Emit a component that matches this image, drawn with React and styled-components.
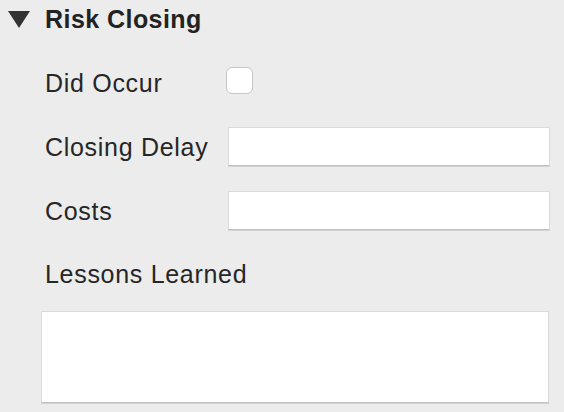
import React from "react";
import styled, { createGlobalStyle } from "styled-components";

const Global = createGlobalStyle`
  html, body {
    margin: 0;
    padding: 0;
    background: #ececec;
  }
  body {
    font-family: "Liberation Sans", Arial, sans-serif;
    color: #262626;
  }
`;

const Panel = styled.div`
  width: 564px;
  height: 412px;
  box-sizing: border-box;
  background: #ececec;
  overflow: hidden;
`;

const Header = styled.div`
  display: flex;
  align-items: center;
  height: 38px;
  padding-left: 8px;
  gap: 15px;
`;

const Title = styled.h2`
  margin: 0;
  font-size: 25px;
  font-weight: 700;
  letter-spacing: 0.45px;
  color: #222;
`;

const Form = styled.div`
  display: grid;
  grid-template-columns: 183px 1fr;
  grid-auto-rows: 39px;
  row-gap: 25px;
  align-items: center;
  margin-top: 25px;
  padding: 0 14px 0 45px;
`;

const Label = styled.label`
  font-size: 25px;
  letter-spacing: 0.7px;
  line-height: 30px;
  white-space: nowrap;
`;

const Check = styled.input.attrs({ type: "checkbox" })`
  appearance: none;
  margin: 0 0 0 -2px;
  width: 27px;
  height: 27px;
  box-sizing: border-box;
  background: #fff;
  border: 1px solid #c6c6c6;
  border-radius: 6px;
`;

const Field = styled.input.attrs({ type: "text" })`
  width: 100%;
  height: 39px;
  margin: 0;
  box-sizing: border-box;
  background: #fff;
  border: 1px solid #dadada;
  border-bottom-color: #c2c2c2;
  box-shadow: 0 1px 0 #d2d2d2;
  outline: none;
`;

const Block = styled.div`
  display: flex;
  flex-direction: column;
  margin-top: 29px;
  padding: 0 15px 0 41px;
`;

const BlockLabel = styled(Label)`
  padding-left: 4px;
`;

const Area = styled.textarea`
  margin: 22px 0 0;
  width: 508px;
  height: 92px;
  box-sizing: border-box;
  background: #fff;
  border: 1px solid #dadada;
  border-bottom-color: #c2c2c2;
  box-shadow: 0 1px 0 #d2d2d2;
  resize: none;
  outline: none;
`;

const Disclosure = () => (
  <svg width="22" height="17" viewBox="0 0 22 17">
    <polygon points="0,0 22,0 11,17" fill="#333" />
  </svg>
);

export default function App() {
  return (
    <Panel>
      <Global />
      <Header>
        <Disclosure />
        <Title>Risk Closing</Title>
      </Header>
      <Form>
        <Label>Did Occur</Label>
        <div>
          <Check />
        </div>
        <Label>Closing Delay</Label>
        <Field />
        <Label>Costs</Label>
        <Field />
      </Form>
      <Block>
        <BlockLabel>Lessons Learned</BlockLabel>
        <Area />
      </Block>
    </Panel>
  );
}
